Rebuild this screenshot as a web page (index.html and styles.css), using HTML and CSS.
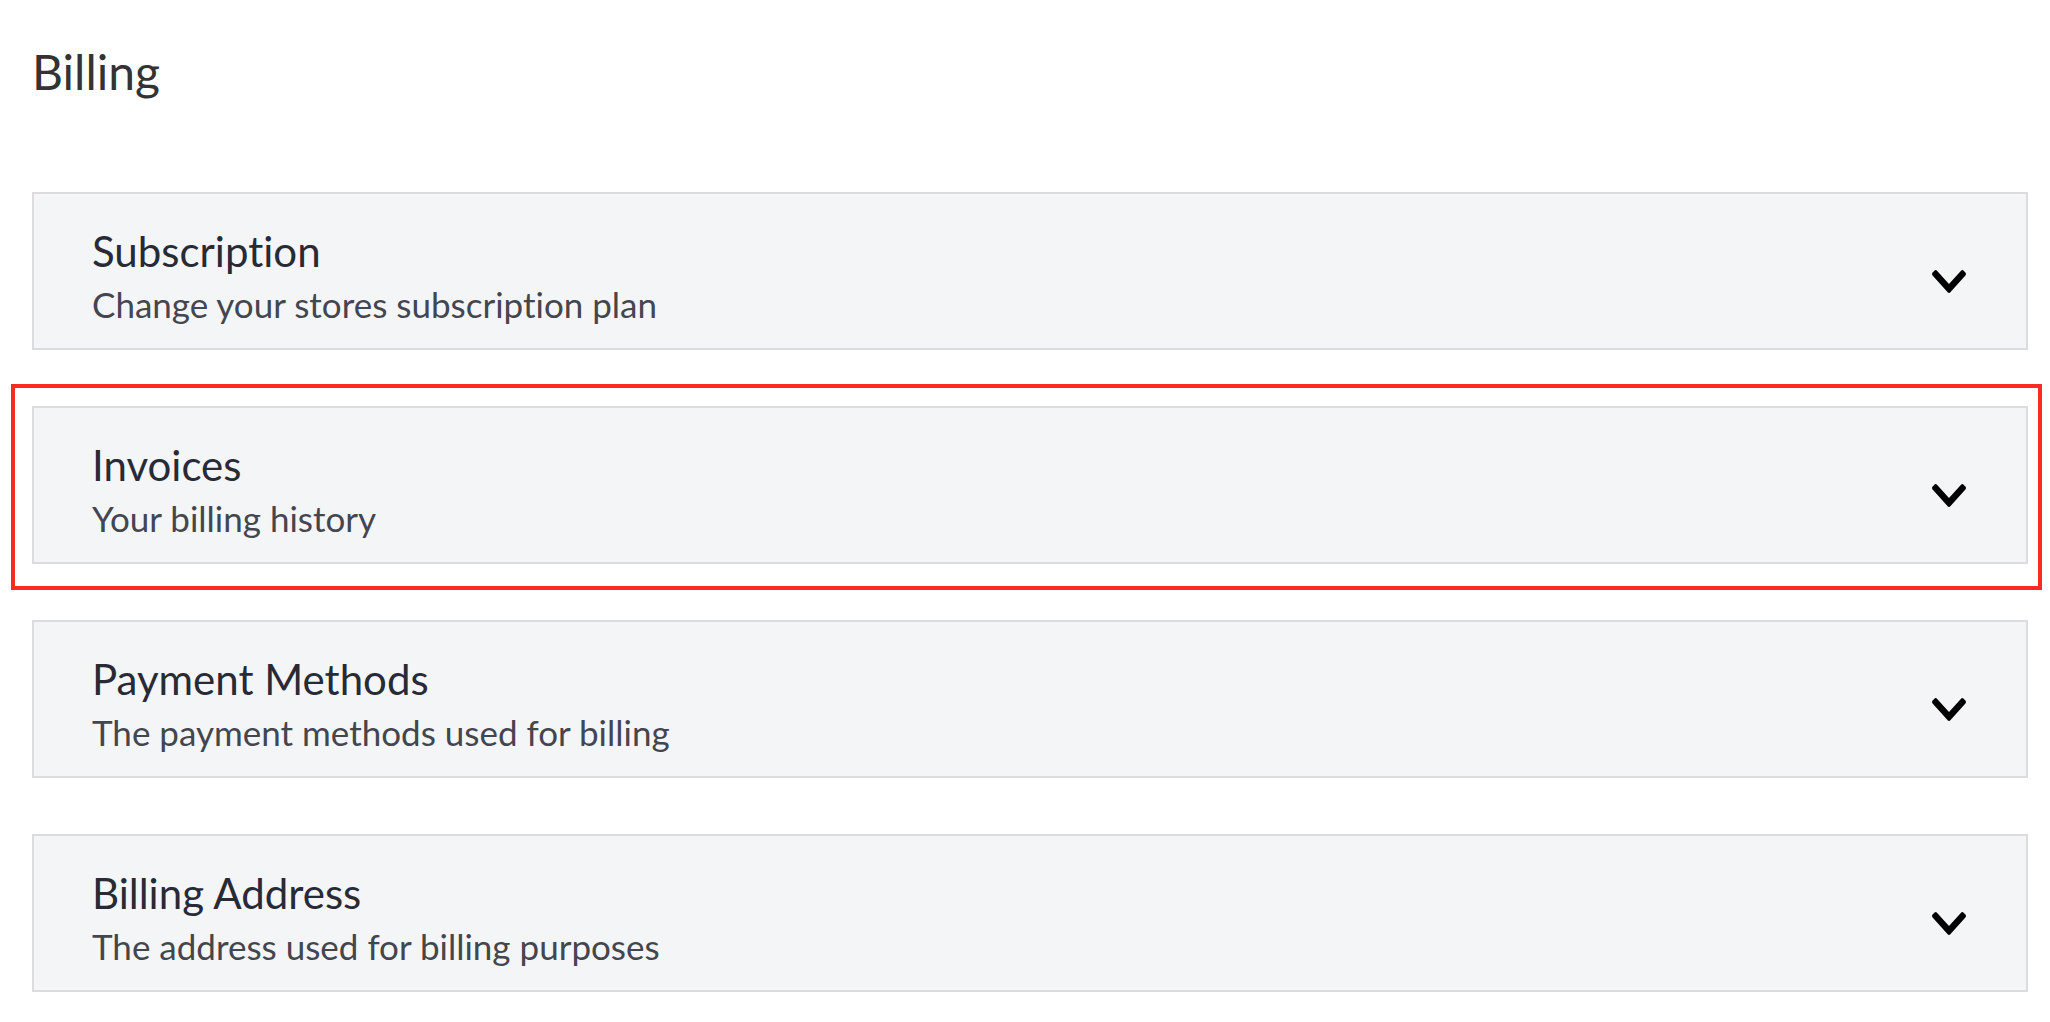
FILE: index.html
```html
<!DOCTYPE html>
<html lang="en">
<head>
<meta charset="utf-8">
<title>Billing</title>
<link rel="stylesheet" href="styles.css">
</head>
<body>
<main class="page">
  <h1 class="page-title">Billing</h1>
  <div class="sections">
    <div class="section">
      <div class="section-text">
        <div class="section-title">Subscription</div>
        <div class="section-sub">Change your stores subscription plan</div>
      </div>
      <svg class="chevron" viewBox="5 123 438 266" preserveAspectRatio="none" aria-hidden="true"><path d="M207.029 381.476L12.686 187.132c-9.373-9.373-9.373-24.569 0-33.941l22.667-22.667c9.357-9.357 24.522-9.375 33.901-.04L224 284.505l154.745-154.021c9.379-9.335 24.544-9.317 33.901.04l22.667 22.667c9.373 9.373 9.373 24.569 0 33.941L240.971 381.476c-9.373 9.372-24.569 9.372-33.942 0z"/></svg>
    </div>
    <div class="highlight">
      <div class="section">
        <div class="section-text">
          <div class="section-title">Invoices</div>
          <div class="section-sub">Your billing history</div>
        </div>
        <svg class="chevron" viewBox="5 123 438 266" preserveAspectRatio="none" aria-hidden="true"><path d="M207.029 381.476L12.686 187.132c-9.373-9.373-9.373-24.569 0-33.941l22.667-22.667c9.357-9.357 24.522-9.375 33.901-.04L224 284.505l154.745-154.021c9.379-9.335 24.544-9.317 33.901.04l22.667 22.667c9.373 9.373 9.373 24.569 0 33.941L240.971 381.476c-9.373 9.372-24.569 9.372-33.942 0z"/></svg>
      </div>
    </div>
    <div class="section">
      <div class="section-text">
        <div class="section-title">Payment Methods</div>
        <div class="section-sub">The payment methods used for billing</div>
      </div>
      <svg class="chevron" viewBox="5 123 438 266" preserveAspectRatio="none" aria-hidden="true"><path d="M207.029 381.476L12.686 187.132c-9.373-9.373-9.373-24.569 0-33.941l22.667-22.667c9.357-9.357 24.522-9.375 33.901-.04L224 284.505l154.745-154.021c9.379-9.335 24.544-9.317 33.901.04l22.667 22.667c9.373 9.373 9.373 24.569 0 33.941L240.971 381.476c-9.373 9.372-24.569 9.372-33.942 0z"/></svg>
    </div>
    <div class="section">
      <div class="section-text">
        <div class="section-title">Billing Address</div>
        <div class="section-sub">The address used for billing purposes</div>
      </div>
      <svg class="chevron" viewBox="5 123 438 266" preserveAspectRatio="none" aria-hidden="true"><path d="M207.029 381.476L12.686 187.132c-9.373-9.373-9.373-24.569 0-33.941l22.667-22.667c9.357-9.357 24.522-9.375 33.901-.04L224 284.505l154.745-154.021c9.379-9.335 24.544-9.317 33.901.04l22.667 22.667c9.373 9.373 9.373 24.569 0 33.941L240.971 381.476c-9.373 9.372-24.569 9.372-33.942 0z"/></svg>
    </div>
  </div>
</main>
</body>
</html>
```
FILE: styles.css
```css
* { box-sizing: border-box; }
html, body { margin: 0; padding: 0; background: #ffffff; }
body {
  font-family: Lato, "Open Sans", "Liberation Sans", sans-serif;
  font-variant-ligatures: none;
  font-feature-settings: "liga" 0, "clig" 0;
  overflow: hidden;
}
.page {
  padding: 0 22px 0 32px;
}
.page-title {
  margin: 43px 0 91px 0;
  font-size: 48px;
  font-weight: 400;
  line-height: 58px;
  color: #333333;
}
.sections {
  display: flex;
  flex-direction: column;
  gap: 56px;
}
.highlight {
  margin: -22px -14px -26px -21px;
  padding: 18px 10px 22px 17px;
  border: 4px solid #fc2b20;
}
.section {
  display: flex;
  align-items: center;
  justify-content: space-between;
  height: 158px;
  padding: 33px 60px 25px 58px;
  background: #f4f5f7;
  border: 2px solid #dcdcde;
}
.section-text {
  display: flex;
  flex-direction: column;
  gap: 8px;
}
.section-title {
  font-size: 42px;
  line-height: 50px;
  color: #282a36;
}
.section-sub {
  font-size: 35px;
  line-height: 40px;
  color: #44464f;
}
.chevron {
  width: 34px;
  height: 23px;
  fill: #000000;
  margin-top: 13px;
  flex: none;
}
```
